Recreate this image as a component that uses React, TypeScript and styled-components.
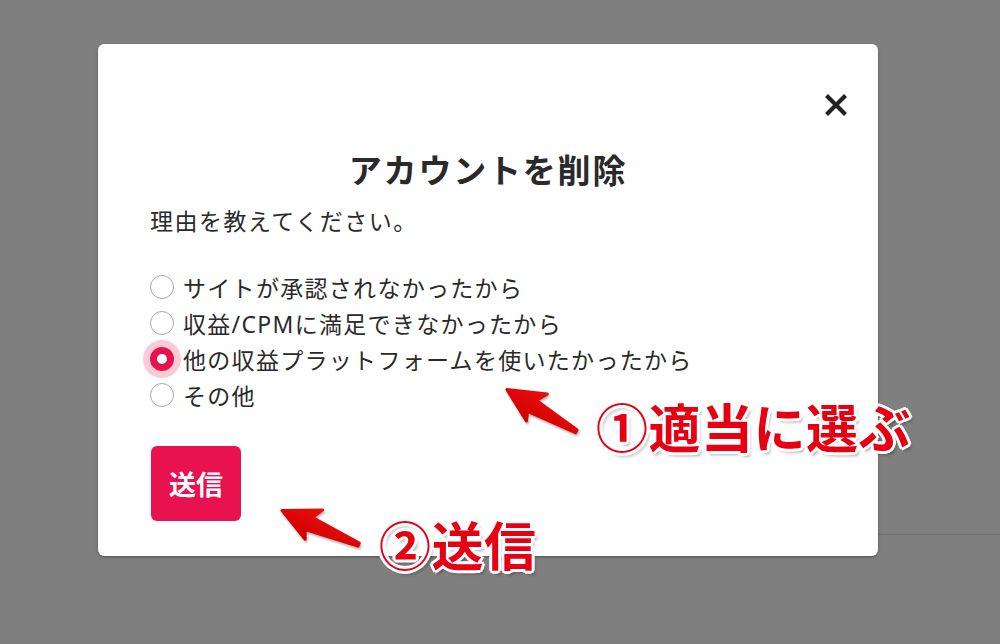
import React, { useState } from 'react';
import styled, { createGlobalStyle } from 'styled-components';

const GlobalStyle = createGlobalStyle`
  html, body {
    margin: 0;
    padding: 0;
  }
  body {
    font-family: "Noto Sans", "Noto Sans CJK JP", sans-serif;
    background: #ffffff;
  }
`;

const reasons = [
    'サイトが承認されなかったから',
    '収益/CPMに満足できなかったから',
    '他の収益プラットフォームを使いたかったから',
    'その他',
];

const CloseIcon = () => (
    <svg width="22" height="22" viewBox="0 0 22 22">
        <path d="M3 3 L19 19 M19 3 L3 19" stroke="#222" strokeWidth="4.2" strokeLinecap="square" />
    </svg>
);

// red callout arrow, tip at (0,0) pointing left, rotated around the tip
const Arrow = ({ x, y, angle, length }: { x: number; y: number; angle: number; length: number }) => (
    <ArrowSvg style={{ left: x, top: y }} width="1" height="1">
        <defs>
            <linearGradient id={`ag${x}`} x1="0" y1="-1" x2="0" y2="1">
                <stop offset="0" stopColor="#ff1a1a" />
                <stop offset="1" stopColor="#d20000" />
            </linearGradient>
        </defs>
        <g transform={`rotate(${angle})`}>
            <path
                d={`M1,0 L38,-17 L32,-6 L${length},-1.6 L${length},1.6 L30,8 L34,17 Z`}
                fill={`url(#ag${x})`}
                stroke={`url(#ag${x})`}
                strokeWidth="3"
                strokeLinejoin="round"
            />
        </g>
    </ArrowSvg>
);

const App = () => {
    const [selected, setSelected] = useState(2);

    return (
        <>
            <GlobalStyle />
            <Screen>
                <PageBehind>
                    <SideBlock />
                </PageBehind>
                <Overlay>
                    <Modal>
                        <CloseRow>
                            <CloseButton aria-label="close">
                                <CloseIcon />
                            </CloseButton>
                        </CloseRow>
                        <Title>アカウントを削除</Title>
                        <Subtitle>理由を教えてください。</Subtitle>
                        <RadioList>
                            {reasons.map((reason, i) => (
                                <RadioRow key={reason}>
                                    <Radio
                                        type="radio"
                                        name="reason"
                                        checked={selected === i}
                                        onChange={() => setSelected(i)}
                                    />
                                    <span>{reason}</span>
                                </RadioRow>
                            ))}
                        </RadioList>
                        <SubmitButton>送信</SubmitButton>
                    </Modal>
                </Overlay>
                <Arrow x={506} y={389} angle={31} length={82} />
                <Arrow x={281} y={510} angle={24} length={85} />
                <Callout style={{ left: 596, top: 396 }}>①適当に選ぶ</Callout>
                <Callout style={{ left: 379, top: 514 }}>②送信</Callout>
            </Screen>
        </>
    );
};

export default App;

const Screen = styled.div`
  position: relative;
  width: 1000px;
  height: 644px;
  overflow: hidden;
  background: #ffffff;
`;

const PageBehind = styled.div`
  display: flex;
  justify-content: flex-end;
  height: 100%;
`;

const SideBlock = styled.div`
  width: 122px;
  height: 534px;
  border-bottom: 1px solid #e0e0e0;
`;

const Overlay = styled.div`
  position: absolute;
  inset: 0;
  background: rgba(0, 0, 0, 0.5);
  padding: 44px 0 0 98px;
`;

const Modal = styled.div`
  width: 780px;
  height: 512px;
  box-sizing: border-box;
  background: #ffffff;
  border-radius: 6px;
  box-shadow: 0 1px 3px rgba(0, 0, 0, 0.35);
  padding: 38px 52px 35px 52px;
  display: flex;
  flex-direction: column;
  align-items: flex-start;
  color: #2e2e2e;
`;

const CloseRow = styled.div`
  align-self: stretch;
  height: 46px;
  display: flex;
  justify-content: flex-end;
  align-items: center;
  margin-right: -21px;
`;

const CloseButton = styled.button`
  border: none;
  background: none;
  padding: 0;
  display: flex;
  cursor: pointer;
`;

const Title = styled.h2`
  align-self: stretch;
  margin: 21px 0 0 0;
  text-align: center;
  font-size: 33px;
  line-height: 44px;
  letter-spacing: 1.8px;
  font-weight: 700;
  color: #2a2a2a;
`;

const Subtitle = styled.p`
  margin: 12px 0 0 0;
  font-size: 23px;
  line-height: 32px;
  letter-spacing: 1.5px;
  color: #2a2a2a;
`;

const RadioList = styled.div`
  margin-top: 32px;
  display: flex;
  flex-direction: column;
`;

const RadioRow = styled.label`
  height: 36px;
  display: flex;
  align-items: center;
  gap: 9px;
  font-size: 23px;
  letter-spacing: 1.3px;
  color: #2a2a2a;
  cursor: pointer;
`;

const Radio = styled.input`
  appearance: none;
  margin: 0;
  width: 24px;
  height: 24px;
  border-radius: 50%;
  border: 1px solid #a8a8a8;
  background: #ffffff;
  box-sizing: border-box;
  flex-shrink: 0;

  &:checked {
    border: 7px solid #e5134d;
    box-shadow: 0 0 0 7px rgba(238, 80, 120, 0.3);
  }
`;

const SubmitButton = styled.button`
  margin-top: 33px;
  margin-left: 1px;
  height: 75px;
  padding: 0 18px;
  border: none;
  border-radius: 6px;
  background: #e8124f;
  color: #ffffff;
  font-family: "Noto Sans CJK JP", sans-serif;
  font-size: 27px;
  font-weight: 700;
  cursor: pointer;
`;

const ArrowSvg = styled.svg`
  position: absolute;
  overflow: visible;
  filter: drop-shadow(1px 2px 1px rgba(0, 0, 0, 0.3));
`;

const Callout = styled.div`
  position: absolute;
  font-family: "Noto Sans CJK JP", sans-serif;
  font-size: 52px;
  line-height: 60px;
  font-weight: 700;
  letter-spacing: 0.5px;
  color: #e60012;
  white-space: nowrap;
  text-shadow:
    3px 0 0 #fff, -3px 0 0 #fff, 0 3px 0 #fff, 0 -3px 0 #fff,
    2px 2px 0 #fff, -2px -2px 0 #fff, 2px -2px 0 #fff, -2px 2px 0 #fff,
    3px 4px 3px rgba(0, 0, 0, 0.3);
`;
